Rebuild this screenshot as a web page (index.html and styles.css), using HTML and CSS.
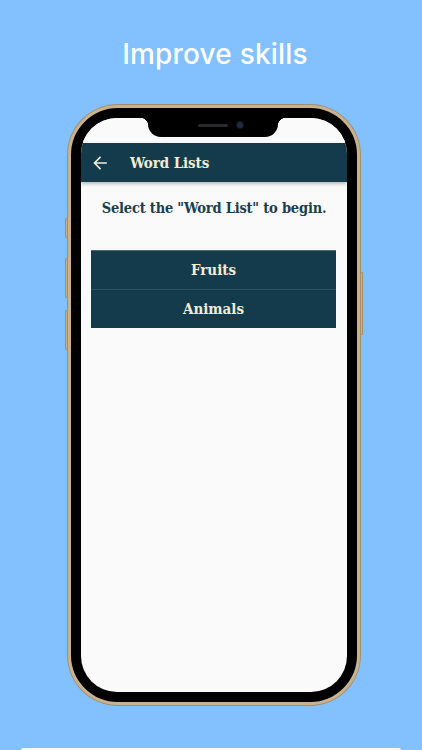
FILE: index.html
```html
<!DOCTYPE html>
<html>
<head>
<meta charset="utf-8">
<link rel="stylesheet" href="styles.css">
</head>
<body>
<h1 class="headline">Improve skills</h1>
<div class="phone">
  <span class="side side-l1"></span>
  <span class="side side-l2"></span>
  <span class="side side-l3"></span>
  <span class="side side-r1"></span>
  <div class="bezel">
    <div class="screen">
      <div class="notch">
        <span class="speaker"></span>
        <span class="camera"></span>
      </div>
      <div class="status"></div>
      <div class="appbar">
        <svg class="back" width="14" height="14" viewBox="0 0 14 14">
          <path d="M13 7H1.8M7 1.5L1.5 7L7 12.5" fill="none" stroke="#F3ECD6" stroke-width="1.6" stroke-linecap="square"/>
        </svg>
        <span class="appbar-title">Word Lists</span>
      </div>
      <p class="prompt">Select the "Word List" to begin.</p>
      <div class="lists">
        <div class="list-item">Fruits</div>
        <div class="list-item">Animals</div>
      </div>
    </div>
  </div>
</div>
<div class="next-card"></div>
</body>
</html>
```
FILE: styles.css
```css
html, body {
  margin: 0;
  padding: 0;
}
body {
  background: #83C0FE;
  width: 422px;
  height: 750px;
  overflow: hidden;
}
.headline {
  margin: 0;
  padding: 36px 0 0 8px;
  height: 36px;
  line-height: 36px;
  text-align: center;
  color: #ffffff;
  font-family: Inter, "Noto Sans", sans-serif;
  font-weight: 500;
  font-size: 28px;
  letter-spacing: 0.2px;
}
.phone {
  position: relative;
  margin: 33px 0 0 68px;
  width: 286px;
  height: 594px;
  border: 3px solid #C9B28D;
  border-radius: 50px;
  background: #000;
  box-shadow: 0 0 0 1px #A38E6B;
}
.side {
  position: absolute;
  width: 3px;
  background: #C9B28D;
  border: 1px solid #A38E6B;
  box-sizing: border-box;
  border-radius: 1px;
}
.side-l1 { left: -6px; top: 110px; height: 20px; }
.side-l2 { left: -6px; top: 150px; height: 40px; }
.side-l3 { left: -6px; top: 202px; height: 40px; }
.side-r1 { right: -6px; top: 164px; height: 63px; }
.bezel {
  padding: 10px;
  height: 574px;
}
.screen {
  position: relative;
  height: 574px;
  background: #FAFAFA;
  border-radius: 36px;
  overflow: hidden;
  font-family: "DejaVu Serif Condensed", "DejaVu Serif", "Liberation Serif", serif;
  font-stretch: condensed;
}
.notch {
  position: absolute;
  top: 0;
  left: 67px;
  width: 130px;
  height: 19px;
  background: #000;
  border-radius: 0 0 13px 13px;
}
.notch::before, .notch::after {
  content: "";
  position: absolute;
  top: 0;
  width: 8px;
  height: 8px;
}
.notch::before {
  left: -8px;
  background: radial-gradient(circle at 0 100%, transparent 8px, #000 8.5px);
}
.notch::after {
  right: -8px;
  background: radial-gradient(circle at 100% 100%, transparent 8px, #000 8.5px);
}
.speaker {
  position: absolute;
  left: 50px;
  top: 6px;
  width: 30px;
  height: 3px;
  border-radius: 2px;
  background: #2a2a2e;
}
.camera {
  position: absolute;
  left: 89px;
  top: 4px;
  width: 6px;
  height: 6px;
  border-radius: 50%;
  background: #1c2a48;
  box-shadow: 0 0 0 1px #111;
}
.status {
  height: 25px;
  background: #FAFAFA;
}
.appbar {
  height: 39px;
  background: #143B4B;
  display: flex;
  align-items: center;
  padding-left: 12px;
  box-shadow: 0 2px 3px rgba(0,0,0,0.25);
}
.back {
  display: block;
}
.appbar-title {
  margin-left: 23px;
  color: #F3ECD6;
  font-weight: bold;
  font-size: 15px;
  letter-spacing: -0.1px;
}
.prompt {
  margin: 17px 0 0;
  line-height: 18px;
  text-align: center;
  color: #1B3E4D;
  font-weight: bold;
  font-size: 14.5px;
  letter-spacing: -0.2px;
}
.lists {
  margin: 33px 11px 0 10px;
}
.list-item {
  height: 38px;
  line-height: 38px;
  background: #143B4B;
  color: #F3ECD6;
  text-align: center;
  font-weight: bold;
  font-size: 15px;
  border-top: 1px solid #2C5262;
}
.list-item:first-child {
  border-top: 1px solid #4E6C78;
}
.next-card {
  margin: 43px 0 0 21px;
  width: 380px;
  height: 10px;
  background: #FAFAFA;
  border-radius: 2px 2px 0 0;
}
```
